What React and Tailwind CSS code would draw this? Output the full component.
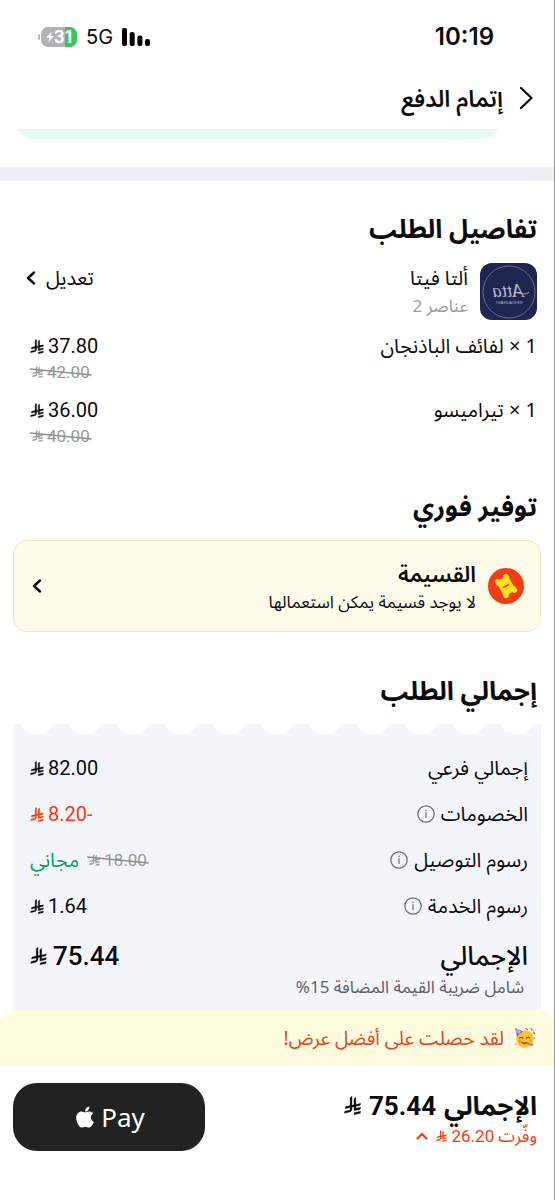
import React from 'react'
import { FaApple } from 'react-icons/fa'

const items = [
    { name: 'لفائف الباذنجان', qty: 1, price: '37.80', oldPrice: '42.00' },
    { name: 'تيراميسو', qty: 1, price: '36.00', oldPrice: '40.00' },
]

const Riyal = ({ className }) => (
    <svg viewBox="-20 -20 1164 1297" className={className} fill="currentColor" stroke="currentColor" strokeWidth="20" role="img" aria-label="ريال">
        <path d="M699.62,1113.02c-20.06,44.48-33.32,92.75-38.4,143.37l424.51-90.24c20.06-44.47,33.31-92.75,38.4-143.37l-424.51,90.24Z" />
        <path d="M1085.73,895.8c20.06-44.47,33.32-92.75,38.4-143.37l-330.68,70.33v-135.2l292.27-62.11c20.06-44.47,33.32-92.75,38.4-143.37l-330.68,70.27V66.13c-50.67,28.45-95.67,66.32-132.25,110.99v403.35l-132.25,28.11V0c-50.67,28.44-95.67,66.32-132.25,110.99v525.69l-295.91,62.88c-20.06,44.47-33.33,92.75-38.42,143.37l334.33-71.05v170.26l-358.3,76.14c-20.06,44.47-33.32,92.75-38.4,143.37l375.04-79.7c30.53-6.35,56.77-24.4,73.83-49.24l68.78-101.97v-.02c7.14-10.55,11.3-23.27,11.3-36.97v-149.98l132.25-28.11v270.4l424.53-90.28Z" />
    </svg>
)

const BackIcon = () => (
    <svg viewBox="0 0 14 24" className="h-6 w-[14px]" fill="none" stroke="currentColor" strokeWidth="2.2" strokeLinecap="round" strokeLinejoin="round" aria-hidden="true">
        <path d="M2 2l10.5 10L2 22" />
    </svg>
)

const MoreIcon = () => (
    <svg viewBox="0 0 10 14" className="h-[14px] w-[10px]" fill="none" stroke="currentColor" strokeWidth="2.4" strokeLinecap="round" strokeLinejoin="round" aria-hidden="true">
        <path d="M8 1.5L2 7l6 5.5" />
    </svg>
)

const ExpandIcon = () => (
    <svg viewBox="0 0 12 8" className="h-2 w-3" fill="none" stroke="currentColor" strokeWidth="2.2" strokeLinecap="round" strokeLinejoin="round" aria-hidden="true">
        <path d="M1.5 6.5L6 2l4.5 4.5" />
    </svg>
)

const Price = ({ value, className = '' }) => (
    <span className={`inline-flex items-center gap-1 font-[Roboto,sans-serif] text-[20px] leading-7 ${className}`}>
        <span>{value}</span>
        <Riyal className="h-[15px] w-[14px]" />
    </span>
)

const OldPrice = ({ value }) => (
    <s className="relative inline-flex items-center gap-1 px-0.5 font-[Roboto,sans-serif] text-[17px] leading-6 text-[#9a9a9c] no-underline">
        <span>{value}</span>
        <Riyal className="h-3 w-[11px]" />
        {/* slanted strike line */}
        <svg viewBox="0 0 62 24" preserveAspectRatio="none" className="absolute inset-0 h-full w-full" aria-hidden="true">
            <path d="M0 9L62 15" stroke="#8e8e90" strokeWidth="1.5" />
        </svg>
    </s>
)

const InfoButton = ({ label }) => (
    <button type="button" aria-label={label} className="text-[#6b6c70]">
        <svg viewBox="0 0 18 18" className="h-[18px] w-[18px]" fill="none" stroke="currentColor" strokeWidth="1.2">
            <circle cx="9" cy="9" r="8.2" />
            <path d="M9 7.2v5.8" />
            <path d="M9 4.6v1.4" />
        </svg>
    </button>
)

const SummaryRow = ({ label, info, children }) => (
    <div className="flex items-center justify-between">
        <dt className="flex items-center gap-1.5 text-[20px] leading-7">
            {label}
            {info && <InfoButton label={`معلومات عن ${label}`} />}
        </dt>
        <dd className="flex items-center gap-2">{children}</dd>
    </div>
)

const StatusBar = () => (
    <div className="flex items-center justify-between pt-[19px] pb-[19px] pr-[60px] pl-[38px] font-[Inter,sans-serif]">
        <span className="text-[24px] font-semibold leading-9">10:19</span>
        <div className="flex items-center gap-[9px]">
            <svg viewBox="0 0 28 18" className="h-[18px] w-7" aria-hidden="true">
                <rect x="0" y="0" width="5" height="18" rx="2" />
                <rect x="7.7" y="4" width="5" height="14" rx="2" />
                <rect x="15.4" y="7.5" width="5" height="10.5" rx="2" />
                <rect x="23" y="11" width="5" height="7" rx="2" />
            </svg>
            <span className="text-[20px] leading-6">5G</span>
            <div className="flex items-center gap-px" dir="ltr">
                <span className="h-[6px] w-[2px] rounded-l-full bg-[#b5b5b5]" />
                <div className="flex h-5 w-9 items-center justify-center rounded-[7px] bg-[linear-gradient(to_right,#b3b3b5_66%,#34c759_66%)] text-white">
                    <svg viewBox="0 0 10 14" className="h-3 w-2" fill="currentColor" aria-hidden="true">
                        <path d="M7 0L0 8h4.2L2.8 14 10 5.6H5.8z" />
                    </svg>
                    <span className="text-[17px] font-bold leading-5">31</span>
                </div>
            </div>
        </div>
    </div>
)

const StoreLogo = () => (
    <svg viewBox="0 0 57 57" className="h-[57px] w-[57px]" direction="ltr" role="img" aria-label="ألتا فيتا">
        <rect width="57" height="57" rx="12" fill="#1f2551" />
        <circle cx="29" cy="29" r="26" fill="none" stroke="#777b9c" strokeWidth="0.8" />
        <g transform="translate(57 0) scale(-1 1)" fill="#b4b6c8" textAnchor="middle">
            <text x="29" y="34" fontFamily="Liberation Serif, serif" fontStyle="italic" fontSize="19">Atta</text>
            <text x="28" y="41" fontFamily="Liberation Sans, sans-serif" fontSize="4">RESTAURANT</text>
        </g>
        <path d="M49 29c-3 3-8 2-14 0" fill="none" stroke="#b4b6c8" strokeWidth="0.9" />
    </svg>
)

const CouponIcon = () => (
    <svg viewBox="0 0 36 36" className="h-9 w-9" aria-hidden="true">
        <circle cx="18" cy="18" r="18" fill="#f23c12" />
        <g transform="rotate(-32 18 18)">
            <path d="M12.4 7.4h2.4a3.2 2.4 0 0 0 6.4 0h2.4a2 2 0 0 1 2 2v3.2l-1 1.4v8l1 1.4v3.2a2 2 0 0 1-2 2h-2.4a3.2 2.4 0 0 0-6.4 0h-2.4a2 2 0 0 1-2-2v-3.2l1-1.4v-8l-1-1.4v-3.2a2 2 0 0 1 2-2z" fill="#ffe11f" />
        </g>
        <path d="M15.5 19.3l5-2.4" stroke="#f23c12" strokeWidth="1.6" strokeLinecap="round" />
    </svg>
)

const PartyFace = () => (
    <svg viewBox="0 0 22 22" className="h-[22px] w-[22px]" aria-hidden="true">
        <circle cx="11" cy="12" r="8.8" fill="#fcc22f" />
        <path d="M1 1l8 3.2-6 5.3z" fill="#7b68c4" />
        <path d="M2.6 1.7L2 5.5l4 1.4.8-3.4z" fill="#b9a6ef" />
        <path d="M5.5 11.2q1.8-1.8 3.4 0M12.3 11.2q1.8-1.8 3.4 0" fill="none" stroke="#6b3f12" strokeWidth="1.1" strokeLinecap="round" />
        <path d="M7.5 15.5q3 2.6 6 0" fill="#8a3b16" stroke="#8a3b16" strokeWidth="0.8" />
        <path d="M13.5 15.2l4 1.8 1.6-.6.4 2-2 .4-4.4-1.8z" fill="#8d7be0" />
        <circle cx="5.8" cy="14.3" r="1.6" fill="#f7923a" />
        <circle cx="16.6" cy="13.6" r="1.4" fill="#f7923a" />
        <path d="M12 1.5l1.6 1M19.5 5l1 1.6" stroke="#e5484d" strokeWidth="1.3" strokeLinecap="round" />
        <path d="M16.5 1.2q2 .6 1.2 2.6" fill="none" stroke="#3f8fe0" strokeWidth="1.2" />
        <circle cx="20.5" cy="11" r="0.8" fill="#49b265" />
        <circle cx="1.8" cy="17" r="0.8" fill="#8d6be0" />
    </svg>
)

const App = () => {
    return (
        <div dir="rtl" lang="ar" className="border-r border-[#999] bg-white font-['Noto_Sans','Noto_Sans_Arabic',sans-serif] text-[#0c0c0e]">
            <StatusBar />

            <header className="flex items-center gap-4 px-[21px] pt-[6px] pb-[13px]">
                <button type="button" aria-label="رجوع">
                    <BackIcon />
                </button>
                <h1 className="text-[23px] font-semibold leading-9">إتمام الدفع</h1>
            </header>

            <div className="mr-[54px] ml-4 flex h-[10px] items-end overflow-hidden">
                <div className="h-8 w-full rounded-b-[18px] bg-[#e6fbf5]" />
            </div>
            <div className="mt-7 h-[14px] bg-[#eeeff3]" />

            <main>
                <section className="pt-[29px] pr-[17px] pl-4">
                    <h2 className="text-[26px] font-bold leading-9">تفاصيل الطلب</h2>
                    <div className="mt-[17px] flex items-start gap-3">
                        <StoreLogo />
                        <div className="grow">
                            <p className="text-[20px] leading-[30px]">ألتا فيتا</p>
                            <p className="text-[17px] leading-[26px] text-[#9a9a9c]">عناصر 2</p>
                        </div>
                        <button type="button" className="ml-[10px] flex items-center gap-[10px] text-[20px] leading-[30px]">
                            تعديل
                            <MoreIcon />
                        </button>
                    </div>
                    <ul className="mt-3 space-y-3 pl-[14px]">
                        {items.map((item) => (
                            <li key={item.name} className="flex items-start justify-between">
                                <span className="text-[20px] leading-7">
                                    {item.qty} × {item.name}
                                </span>
                                <div className="flex flex-col items-end">
                                    <Price value={item.price} />
                                    <OldPrice value={item.oldPrice} />
                                </div>
                            </li>
                        ))}
                    </ul>
                </section>

                <section className="mt-10 px-[13px]">
                    <h2 className="px-1 text-[26px] font-bold leading-9">توفير فوري</h2>
                    <button type="button" className="mt-4 flex w-full items-center gap-3 rounded-[14px] border border-[#f2e8bd] bg-[#fffcea] py-4 pr-4 pl-[18px] text-right">
                        <CouponIcon />
                        <span className="grow">
                            <span className="block text-[22px] font-semibold leading-8">القسيمة</span>
                            <span className="block text-[17px] leading-[26px]">لا يوجد قسيمة يمكن استعمالها</span>
                        </span>
                        <MoreIcon />
                    </button>
                </section>

                <section className="mt-10 px-[13px]">
                    <h2 className="px-1 text-[26px] font-bold leading-9">إجمالي الطلب</h2>
                    <div className="mt-4 bg-[#f4f5fa] pb-[10px]">
                        {/* receipt edge */}
                        <div className="flex justify-around overflow-hidden" aria-hidden="true">
                            {Array.from({ length: 11 }, (_, i) => (
                                <span key={i} className="h-[10px] w-8 rounded-[0_0_50%_50%/0_0_100%_100%] bg-white" />
                            ))}
                        </div>
                        <dl className="space-y-[18px] pt-5 pr-[13px] pl-[17px]">
                            <SummaryRow label="إجمالي فرعي">
                                <Price value="82.00" />
                            </SummaryRow>
                            <SummaryRow label="الخصومات" info>
                                <Price value="-8.20" className="text-[#f23c12]" />
                            </SummaryRow>
                            <SummaryRow label="رسوم التوصيل" info>
                                <OldPrice value="18.00" />
                                <span className="text-[20px] leading-7 text-[#0a9e6e]">مجاني</span>
                            </SummaryRow>
                            <SummaryRow label="رسوم الخدمة" info>
                                <Price value="1.64" />
                            </SummaryRow>
                            <div className="flex h-9 items-baseline justify-between leading-[34px]">
                                <dt className="text-[26px] font-medium">الإجمالي</dt>
                                <dd className="flex items-baseline gap-1.5 font-[Roboto,sans-serif] text-[26px] font-medium">
                                    75.44
                                    <Riyal className="h-[18px] w-[17px]" />
                                </dd>
                            </div>
                        </dl>
                        <p className="px-[17px] text-[17px] leading-[26px] text-[#5f6064]">شامل ضريبة القيمة المضافة 15%</p>
                    </div>
                </section>
            </main>

            <p className="flex items-center gap-[10px] rounded-t-2xl bg-[#fdfcde] px-[18px] py-[14px] text-[19px] leading-7 text-[#e8431f]">
                <PartyFace />
                لقد حصلت على أفضل عرض!
            </p>

            <footer className="flex items-start justify-between pt-[17px] pr-[17px] pb-[49px] pl-[13px]">
                <div className="pt-1">
                    <p className="flex items-baseline gap-2 text-[26px] font-bold leading-9">
                        الإجمالي
                        <span className="font-[Roboto,sans-serif]">75.44</span>
                        <Riyal className="h-[19px] w-[17px]" />
                    </p>
                    <button type="button" className="flex items-center gap-1 text-[17px] leading-6 text-[#f23c12]">
                        وفّرت
                        <span className="font-[Roboto,sans-serif]">26.20</span>
                        <Riyal className="h-3 w-[11px]" />
                        <span className="pr-1">
                            <ExpandIcon />
                        </span>
                    </button>
                </div>
                <button type="button" dir="ltr" className="flex h-[68px] w-48 items-center justify-center gap-1 rounded-[24px] bg-[#222] text-[26px] leading-9 text-white">
                    <FaApple className="h-6 w-6" />
                    Pay
                </button>
            </footer>
        </div>
    )
}

export default App
